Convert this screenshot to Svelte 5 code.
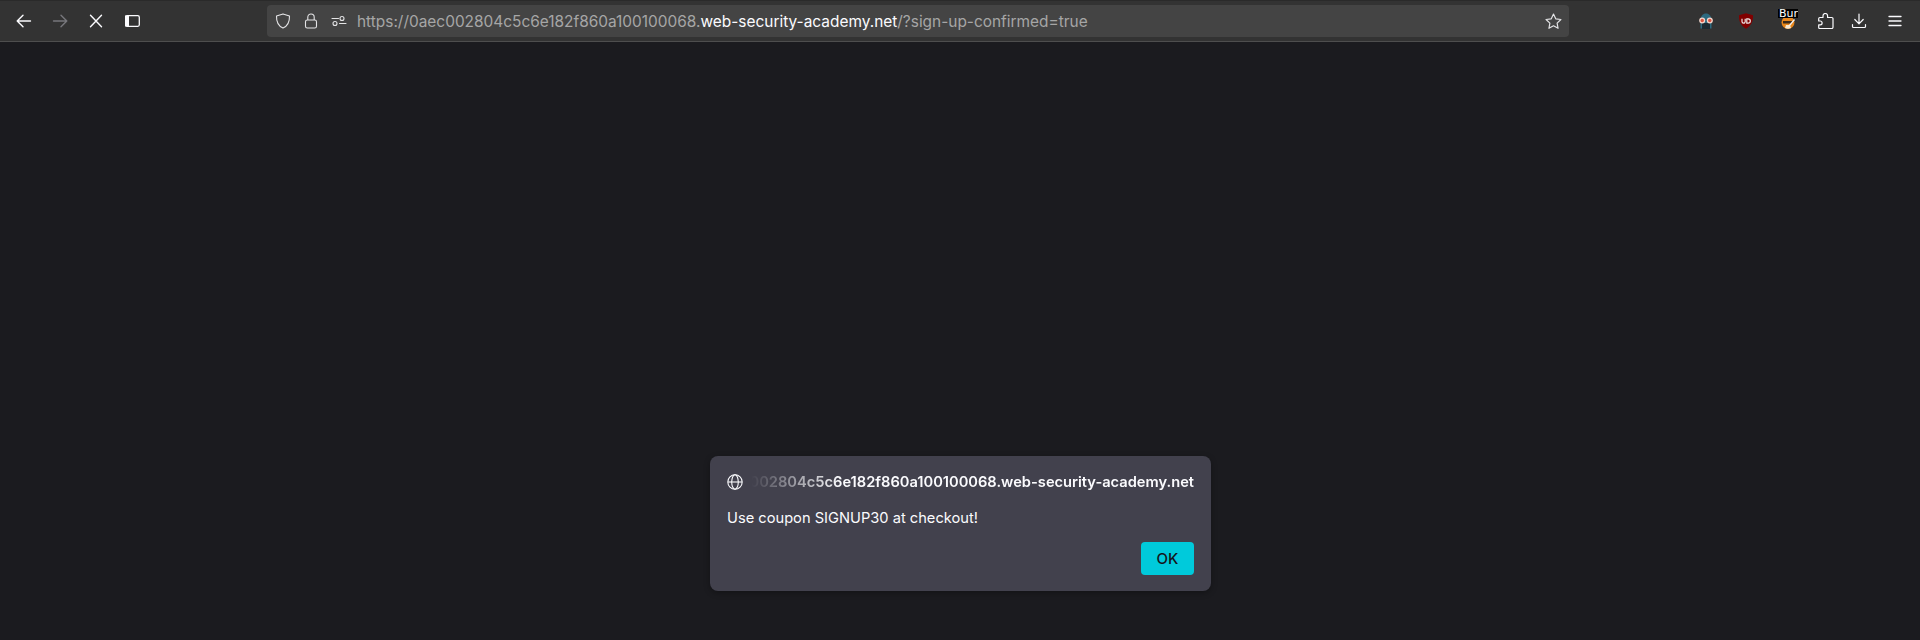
<script>
  const host = '0aec002804c5c6e182f860a100100068.web-security-academy.net';
</script>

<div class="window">
  <header class="toolbar">
    <div class="nav">
      <button class="tb" aria-label="Back">
        <svg width="16" height="16" viewBox="0 0 16 16" fill="none" stroke="#fbfbfe" stroke-width="1.4" stroke-linecap="round" stroke-linejoin="round"><path d="M1.2 8h13.3M7 2.2 1.2 8 7 13.8"/></svg>
      </button>
      <button class="tb" aria-label="Forward">
        <svg width="16" height="16" viewBox="0 0 16 16" fill="none" stroke="#77777c" stroke-width="1.4" stroke-linecap="round" stroke-linejoin="round"><path d="M14.8 8H1.5M9 2.2 14.8 8 9 13.8"/></svg>
      </button>
      <button class="tb" aria-label="Stop">
        <svg width="16" height="16" viewBox="0 0 16 16" fill="none" stroke="#fbfbfe" stroke-width="1.4" stroke-linecap="round"><path d="M2.500 2.200 13.500 13.800M13.500 2.200 2.500 13.800"/></svg>
      </button>
      <button class="tb" aria-label="Sidebar">
        <svg width="16" height="16" viewBox="0 0 16 16" fill="none"><rect x="1.700" y="2.700" width="13.600" height="10.600" rx="1.500" stroke="#fbfbfe" stroke-width="1.300"/><rect x="1" y="2.500" width="4" height="11" fill="#fbfbfe"/></svg>
      </button>
    </div>

    <div class="urlbar">
      <div class="url-icons">
        <svg width="16" height="16" viewBox="0 0 16 16" fill="none" stroke="#e4e4e6" stroke-width="1.1" stroke-linejoin="round"><path d="M8 .9 14.500 3c.2 5.500-1.500 9.800-6.500 12.100C3 12.800 1.300 8.500 1.500 3Z"/></svg>
        <svg width="16" height="16" viewBox="0 0 16 16" fill="none" stroke="#e4e4e6" stroke-width="1.1"><rect x="2.500" y="7" width="11" height="8" rx="1.800"/><path d="M4.800 7V4.200a3.200 3.200 0 0 1 6.400 0V7"/></svg>
        <svg width="16" height="16" viewBox="0 0 16 16" fill="none" stroke="#e4e4e6" stroke-width="1.1" stroke-linecap="round"><path d="M7.500 5.500H1M15 10.500H8.500"/><circle cx="11" cy="5.500" r="2"/><circle cx="4" cy="10.500" r="2"/></svg>
      </div>
      <div class="url"><span class="dim">https://0aec002804c5c6e182f860a100100068.</span><span class="bright">web-security-academy.net</span><span class="dim">/?sign-up-confirmed=true</span></div>
      <svg class="star" width="17" height="17" viewBox="0 0 16 16" fill="none" stroke="#e4e4e6" stroke-width="1.1" stroke-linejoin="round"><path d="m8 1 2.100 4.500 4.900.6-3.600 3.400.9 4.900L8 12l-4.300 2.400.9-4.900L1 6.100l4.900-.6Z"/></svg>
    </div>

    <div class="actions">
      <div class="ext spy" aria-hidden="true">
        <svg width="16" height="16" viewBox="0 0 16 16"><path d="M2.500 7C2.500 3 5 .5 8 .5s5.500 2.500 5.500 6.500v8.500h-11Z" fill="#2d6a80"/><rect x="4" y="10" width="8" height="6" fill="#1b2a33"/><circle cx="4.200" cy="7.500" r="3" fill="#f4d7cd"/><circle cx="11.800" cy="7.500" r="3" fill="#f4d7cd"/><circle cx="4.200" cy="7.500" r="1.700" fill="#d8533f"/><circle cx="11.800" cy="7.500" r="1.700" fill="#d8533f"/></svg>
      </div>
      <div class="ext ublock" aria-hidden="true">
        <svg width="16" height="16" viewBox="0 0 16 16"><path d="M8 .3 15 2.300c.3 6-2 10.700-7 13.400C3 13 .7 8.300 1 2.300Z" fill="#800000"/><path d="M4 5.800v2.800a1.600 1.600 0 0 0 3.200 0V5.800M8.800 5.800v4.400h1.300a2.200 2.200 0 0 0 0-4.400Z" fill="none" stroke="#f0e6e6" stroke-width="1.200"/></svg>
      </div>
      <div class="ext burp" aria-hidden="true">
        <svg width="16" height="16" viewBox="0 0 16 16"><circle cx="8" cy="9.500" r="6.500" fill="#e8861a"/><path d="M3 8h9v2.500H3Z" fill="#3a2a1a"/><path d="M5 15c2 1 4 1 6 0l-1-3H6Z" fill="#f8e8d0"/><path d="m9.500 12.500 5-6" stroke="#f4f4f4" stroke-width="1.300"/></svg>
        <span class="badge">Burp</span>
      </div>
      <button class="tb puzzle" aria-label="Extensions">
        <svg width="16" height="16" viewBox="0 0 16 16" fill="none" stroke="#fbfbfe" stroke-width="1.200" stroke-linejoin="round"><path d="M5 4.500V2.800a2.300 2.300 0 0 1 4.600 0V4.500h4.200a1.200 1.200 0 0 1 1.200 1.200V14.300a1.200 1.200 0 0 1-1.200 1.200H1.700a1 1 0 0 1-1-1V11.800h1.500a1.900 1.900 0 0 0 0-3.800H.7V5.700A1.200 1.200 0 0 1 1.900 4.500Z"/></svg>
      </button>
      <button class="tb" aria-label="Downloads">
        <svg width="16" height="16" viewBox="0 0 16 16" fill="none" stroke="#fbfbfe" stroke-width="1.200" stroke-linecap="round" stroke-linejoin="round"><path d="M8 1v9.500M3.800 6.500 8 10.800l4.200-4.300M1.500 11.500V13.500a1 1 0 0 0 1 1h11a1 1 0 0 0 1-1V11.500"/></svg>
      </button>
      <button class="tb" aria-label="Menu">
        <svg width="16" height="16" viewBox="0 0 16 16" fill="none" stroke="#fbfbfe" stroke-width="1.300" stroke-linecap="round"><path d="M2 3.500h12M2 8h12M2 12.500h12"/></svg>
      </button>
    </div>
  </header>

  <main class="page">
    <div class="dialog" role="alertdialog">
      <div class="origin">
        <svg width="16" height="16" viewBox="0 0 16 16" fill="none" stroke="#fbfbfe" stroke-width="1.100"><circle cx="8" cy="8" r="7.200"/><ellipse cx="8" cy="8" rx="3.300" ry="7.200"/><path d="M1 8h14"/></svg>
        <div class="host"><span>{host}</span></div>
      </div>
      <p class="message">Use coupon SIGNUP30 at checkout!</p>
      <div class="buttons"><button class="ok">OK</button></div>
    </div>
  </main>
</div>

<style>
  :global(body) { margin: 0; background: #1b1b1f; }
  .window {
    width: 1920px; height: 640px; display: flex; flex-direction: column;
    font-family: Inter, "Liberation Sans", sans-serif; background: #1b1b1f; overflow: hidden;
  }
  .toolbar {
    height: 40px; flex: none; display: flex; align-items: center;
    background: #333333; border-top: 1px solid #2a2a2a; border-bottom: 1px solid #4e4e4e;
  }
  .tb {
    width: 16px; height: 16px; padding: 0; border: 0; background: none; display: flex;
  }
  .nav { display: flex; align-items: center; gap: 20px; margin-left: 16px; width: 251px; flex: none; }
  .urlbar {
    width: 1302px; height: 32px; flex: none; display: flex; align-items: center;
    background: #444444; border-radius: 4px; box-sizing: border-box; padding: 0 5px 0 8px;
  }
  .url-icons { display: flex; gap: 12px; align-items: center; margin-right: 10px; }
  .url { flex: 1; font-size: 15.43px; white-space: nowrap; }
  .dim { color: #a6a6a6; }
  .bright { color: #fbfbfe; }
  .star { margin-right: 2px; }
  .actions { display: flex; align-items: center; margin-left: 129px; }
  .ext { width: 16px; height: 16px; position: relative; flex: none; }
  .spy { margin-right: 24px; }
  .ublock { margin-right: 26px; }
  .burp { margin-right: 22px; }
  .badge {
    position: absolute; left: -2px; top: -4px; width: 20px; height: 9px; overflow: hidden;
    background: #000; color: #fff; font: 11px/9px "DejaVu Sans", sans-serif; white-space: nowrap; padding-left: 1px; box-sizing: border-box;
  }
  .actions .tb { margin-right: 20px; }
  .actions .puzzle { margin-right: 17px; }
  .actions .tb:last-child { margin-right: 0; }
  .page { flex: 1; display: flex; align-items: flex-end; padding: 0 0 49px 710px; }
  .dialog {
    width: 501px; height: 135px; box-sizing: border-box; background: #42414d; border-radius: 8px;
    padding: 16px 17px; display: flex; flex-direction: column;
    box-shadow: 0 2px 6px rgba(0,0,0,.3);
  }
  .origin { display: flex; align-items: center; gap: 8px; height: 20px; }
  .host {
    flex: 1; min-width: 0; display: flex; justify-content: flex-end; overflow: hidden;
    font-size: 14.67px; font-weight: 600; color: #fbfbfe; white-space: nowrap;
    mask-image: linear-gradient(to right, transparent, #000 90px);
  }
  .host span { flex: none; }
  .message { margin: 16px 0 0; font-size: 14.67px; color: #fbfbfe; line-height: 20px; }
  .buttons { margin-top: auto; display: flex; justify-content: flex-end; }
  .ok {
    width: 53px; height: 33px; border: 0; border-radius: 4px; background: #00cadb; color: #15141a;
    font: 500 15px Inter, sans-serif; padding: 0;
  }
</style>
